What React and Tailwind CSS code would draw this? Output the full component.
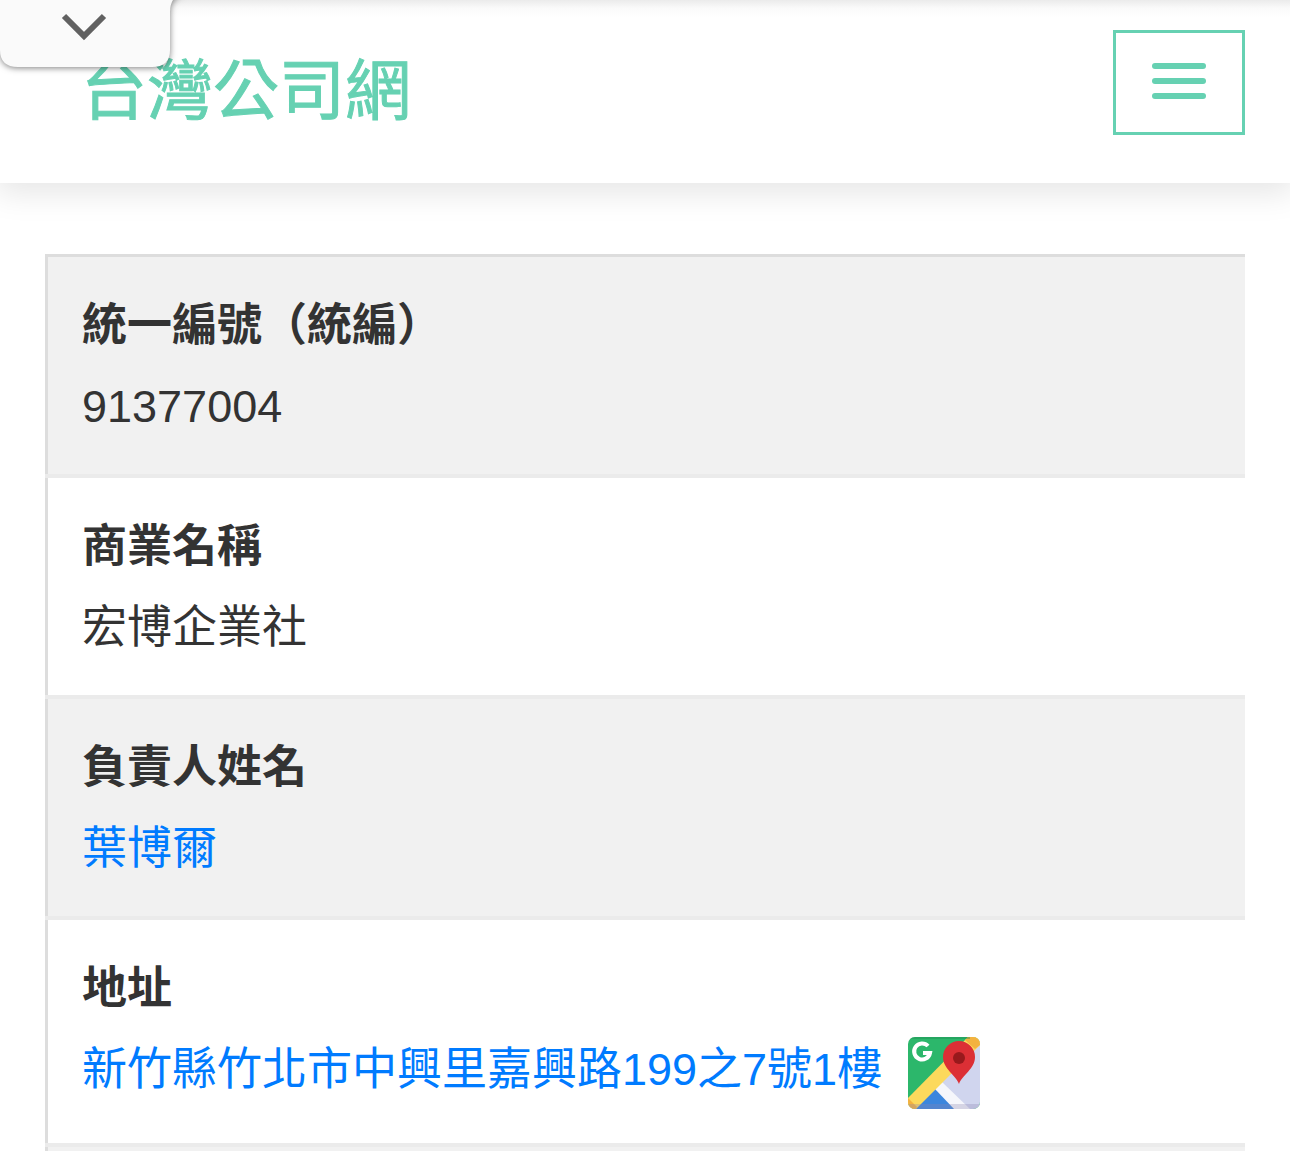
const rows = [
  { label: "統一編號（統編）", value: "91377004" },
  { label: "商業名稱", value: "宏博企業社" },
  { label: "負責人姓名", value: "葉博爾", link: true },
  { label: "地址", value: "新竹縣竹北市中興里嘉興路199之7號1樓", link: true, map: true },
];

function MapIcon() {
  return (
    <svg viewBox="0 0 72 72" className="h-[72px] w-[72px]" aria-hidden="true">
      <defs>
        <clipPath id="map-tile">
          <rect width="72" height="72" rx="7" />
        </clipPath>
      </defs>
      <g clipPath="url(#map-tile)">
        <rect width="72" height="72" fill="#2cb76b" />
        <path d="M72 4 L27 49 L50 72 H72 Z" fill="#d0d5ee" />
        <path d="M27 50 L50 72 H5 Z" fill="#3b86dd" />
        <path d="M27 52 L34 45 L62 72 H46 Z" fill="#f5f6fb" />
        <path d="M60 0 H72 V8 L7 73 H0 V61 Z" fill="#fcd95c" />
        <path d="M60 0 H72 V8 L67 12 L57 3 Z" fill="#f3b23f" />
        <path d="M0 61 L9 70 L7 73 H0 Z" fill="#f3b23f" />
        <path d="M0 67 H72 V72 H0 Z" fill="#8a86b0" fillOpacity="0.3" />
        <path d="M0 0 H62 V2 H0 Z" fill="#1d8a50" fillOpacity="0.4" />
      </g>
      <path
        d="M20 9 A8 8 0 1 0 22 16 H15"
        fill="none"
        stroke="#fff"
        strokeWidth="4"
      />
      <path
        d="M51 47 C48 38 35 32 35 20 A16 16 0 0 1 67 20 C67 32 54 38 51 47 Z"
        fill="#dc2f35"
      />
      <circle cx="51" cy="21" r="6" fill="#98191c" />
    </svg>
  );
}

function PullTab() {
  return (
    <button
      type="button"
      aria-label="收合"
      className="absolute top-0 left-0 z-20 h-[72px] w-[184px]"
    >
      <svg viewBox="0 0 184 72" className="h-full w-full overflow-visible" aria-hidden="true">
        <path
          d="M-2 -6 H184 Q170 -4 170 12 V50 Q170 67 152 67 H18 Q0 67 0 50 Z"
          fill="#fafafa"
          className="drop-shadow-[0_1px_3px_rgba(0,0,0,0.5)]"
        />
        <path d="M64 16 L84 36 L104 16" fill="none" stroke="#616161" strokeWidth="6" />
      </svg>
    </button>
  );
}

export default function App() {
  return (
    <div className="relative min-h-screen overflow-hidden bg-white font-['Liberation_Sans','Noto_Sans_CJK_TC',sans-serif] text-[45px] leading-[81px] text-[#333]">
      <PullTab />

      <header className="relative z-10 flex h-[183px] items-start justify-between bg-white bg-linear-to-b from-[#ebebeb] via-[#fafafa] via-[8px] to-white to-[18px] pr-[45px] pl-[81px] shadow-[0_6px_30px_4px_rgba(0,0,0,0.1)]">
        <a
          href="#"
          className="mt-[51px] text-[66px] text-[#66d1b2] [-webkit-text-stroke:1px_#66d1b2]"
        >
          台灣公司網
        </a>
        <button
          type="button"
          aria-label="選單"
          className="mt-[30px] flex h-[105px] w-[132px] flex-col items-center justify-center gap-[9px] border-3 border-[#66d1b2] pb-1"
        >
          <span className="h-[6px] w-[54px] rounded-full bg-[#66d1b2]" />
          <span className="h-[6px] w-[54px] rounded-full bg-[#66d1b2]" />
          <span className="h-[6px] w-[54px] rounded-full bg-[#66d1b2]" />
        </button>
      </header>

      <main className="px-[45px] pt-[71px]">
        <table className="block border-t-3 border-[#ddd]">
          <tbody className="block">
            {rows.map((row) => (
              <tr
                key={row.label}
                className="block border-b-4 border-[#ebebeb] odd:bg-[#f1f1f1]"
              >
                <th
                  scope="row"
                  className="block border-l-3 border-[#ddd] pt-[28px] pl-[34px] text-left font-bold"
                >
                  {row.label}
                </th>
                <td
                  className={`block border-l-3 border-[#ddd] pl-[34px] ${row.map ? "pb-[33px]" : "pb-[27px]"}`}
                >
                  {row.link ? (
                    <a href="#" className="text-[#007bff]">
                      {row.value}
                    </a>
                  ) : (
                    row.value
                  )}
                  {row.map && (
                    <a href="#" aria-label="Google 地圖" className="ml-[26px] inline-block align-middle">
                      <MapIcon />
                    </a>
                  )}
                </td>
              </tr>
            ))}
            <tr className="block bg-[#f1f1f1]">
              <td className="block h-1 border-l-3 border-[#ddd]" />
            </tr>
          </tbody>
        </table>
      </main>
    </div>
  );
}
